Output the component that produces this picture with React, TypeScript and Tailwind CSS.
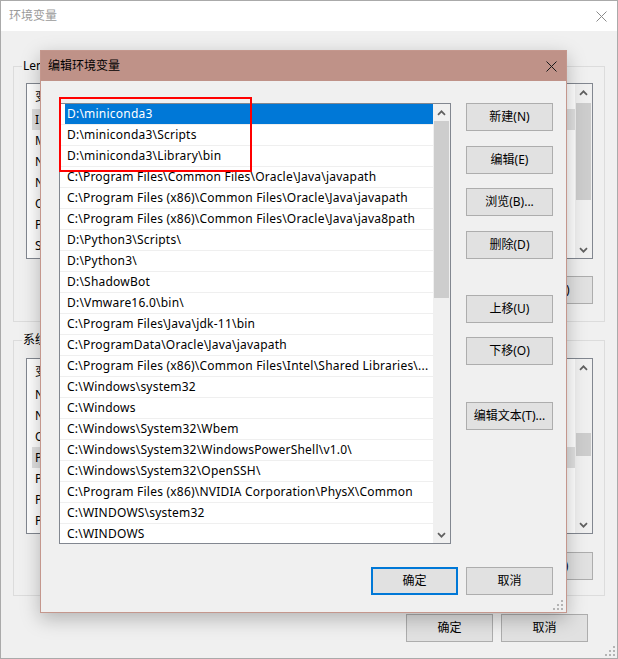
import React from "react";

const FONT = "font-['Noto_Sans','Noto_Sans_CJK_SC',sans-serif]";

function XIcon({ color }: { color: string }) {
  return (
    <svg width="11" height="11" viewBox="0 0 11 11">
      <path d="M0.5 0.5 L10.5 10.5 M10.5 0.5 L0.5 10.5" stroke={color} strokeWidth="1" fill="none" />
    </svg>
  );
}

function Chev({ down }: { down?: boolean }) {
  return (
    <svg width="9" height="6" viewBox="0 0 9 6">
      <path
        d={down ? "M1 1.2 L4.5 4.7 L8 1.2" : "M1 4.8 L4.5 1.3 L8 4.8"}
        stroke="#606060"
        strokeWidth="1.7"
        fill="none"
      />
    </svg>
  );
}

function Grip() {
  return (
    <svg width="10" height="10" viewBox="0 0 10 10">
      <g fill="#b4b4b4">
        <rect x="8" y="0" width="2" height="2" />
        <rect x="4" y="4" width="2" height="2" />
        <rect x="8" y="4" width="2" height="2" />
        <rect x="0" y="8" width="2" height="2" />
        <rect x="4" y="8" width="2" height="2" />
        <rect x="8" y="8" width="2" height="2" />
      </g>
    </svg>
  );
}

function Scrollbar({ thumb }: { thumb: string }) {
  return (
    <div className="w-[17px] shrink-0 flex flex-col bg-[#f0f0f0]">
      <div className="h-[17px] shrink-0 flex items-center justify-center">
        <Chev />
      </div>
      <div className={`mx-px shrink-0 bg-[#cdcdcd] ${thumb}`} />
      <div className="flex-1" />
      <div className="h-[17px] shrink-0 flex items-center justify-center">
        <Chev down />
      </div>
    </div>
  );
}

function Btn({ children, primary, className }: { children: React.ReactNode; primary?: boolean; className?: string }) {
  return (
    <div
      className={`flex items-center justify-center w-[87px] h-[28px] shrink-0 bg-[#e1e1e1] text-[12px] text-black ${
        primary ? "border-2 border-[#0078d7]" : "border border-[#adadad]"
      } ${className ?? ""}`}
    >
      {children}
    </div>
  );
}

function BgList({ rows, hi, thumb }: { rows: string[]; hi: number; thumb: string }) {
  return (
    <div className="flex h-[176px] border border-[#828790] bg-white">
      <div className="flex-1 flex flex-col overflow-hidden">
        <div className="h-[25px] shrink-0 flex items-center pl-[8px] whitespace-nowrap">变量</div>
        {rows.map((r, i) => (
          <div key={i} className="h-[21px] shrink-0 flex">
            <div
              className={`flex-1 ml-[5px] pl-[3px] flex items-center whitespace-nowrap overflow-hidden tracking-[0.2px] ${
                i === hi ? "bg-[#e0e0e0]" : ""
              }`}
            >
              {r}
            </div>
          </div>
        ))}
      </div>
      <Scrollbar thumb={thumb} />
    </div>
  );
}

const userRows = ["IntelliJ IDEA", "MOZ_PLUGIN_PATH", "NVM_HOME", "NVM_SYMLINK", "OneDrive", "Path", "SHADOWBOT_HOME"];

const sysRows = ["NUMBER_OF_PROCESSORS", "NVM_HOME", "OS", "Path", "PATHEXT", "PROCESSOR_ARCHITECTURE", "PROCESSOR_IDENTIFIER"];

const paths = [
  "D:\\miniconda3",
  "D:\\miniconda3\\Scripts",
  "D:\\miniconda3\\Library\\bin",
  "C:\\Program Files\\Common Files\\Oracle\\Java\\javapath",
  "C:\\Program Files (x86)\\Common Files\\Oracle\\Java\\javapath",
  "C:\\Program Files (x86)\\Common Files\\Oracle\\Java\\java8path",
  "D:\\Python3\\Scripts\\",
  "D:\\Python3\\",
  "D:\\ShadowBot",
  "D:\\Vmware16.0\\bin\\",
  "C:\\Program Files\\Java\\jdk-11\\bin",
  "C:\\ProgramData\\Oracle\\Java\\javapath",
  "C:\\Program Files (x86)\\Common Files\\Intel\\Shared Libraries\\...",
  "C:\\Windows\\system32",
  "C:\\Windows",
  "C:\\Windows\\System32\\Wbem",
  "C:\\Windows\\System32\\WindowsPowerShell\\v1.0\\",
  "C:\\Windows\\System32\\OpenSSH\\",
  "C:\\Program Files (x86)\\NVIDIA Corporation\\PhysX\\Common",
  "C:\\WINDOWS\\system32",
  "C:\\WINDOWS",
];

export default function App() {
  return (
    <div className={`relative w-[618px] h-[659px] overflow-hidden bg-[#f0f0f0] text-[12px] text-black ${FONT}`}>
      {/* Background window: 环境变量 */}
      <div className="relative flex flex-col w-[618px] h-[659px] border border-[#aaaaaa] bg-[#f0f0f0]">
        <div className="h-[30px] shrink-0 bg-white flex items-center justify-between pl-[8px] pr-[10px]">
          <span className="text-[12px] text-[#9a9a9a]">环境变量</span>
          <XIcon color="#8a8a8a" />
        </div>
        <div className="flex flex-col px-[12px]">
          <div className="relative mt-[35px] border border-[#dcdcdc] pt-[16px] pl-[12px] pr-[11px] pb-[17px]">
            <span className="absolute left-[8px] -top-[9px] bg-[#f0f0f0] px-px leading-[16px]">Len 的用户变量(U)</span>
            <BgList rows={userRows} hi={0} thumb="mt-[2px] h-[97px]" />
            <div className="mt-[17px] flex justify-end gap-[10px]">
              <Btn>新建(N)...</Btn>
              <Btn>编辑(E)...</Btn>
              <Btn>删除(D)</Btn>
            </div>
          </div>
          <div className="relative mt-[18px] border border-[#dcdcdc] pt-[17px] pl-[12px] pr-[11px] pb-[15px]">
            <span className="absolute left-[8px] -top-[9px] bg-[#f0f0f0] px-px leading-[16px]">系统变量(S)</span>
            <BgList rows={sysRows} hi={3} thumb="mt-[57px] h-[23px]" />
            <div className="mt-[18px] flex justify-end gap-[10px]">
              <Btn>新建(W)...</Btn>
              <Btn>编辑(I)...</Btn>
              <Btn>删除(L)</Btn>
            </div>
          </div>
          <div className="mt-[18px] flex justify-end gap-[8px] pr-[17px]">
            <Btn>确定</Btn>
            <Btn>取消</Btn>
          </div>
        </div>
        <div className="absolute right-[2px] bottom-[2px]">
          <Grip />
        </div>
      </div>

      {/* Dialog: 编辑环境变量 */}
      <div className="absolute left-[40px] top-[50px] w-[527px] h-[563px] flex flex-col bg-[#f0f0f0] border border-[#c4978d] shadow-[0_6px_18px_rgba(0,0,0,0.25)]">
        <div className="h-[30px] shrink-0 bg-[#bf9288] flex items-center justify-between pl-[7px] pr-[9px]">
          <span className="text-[12px] text-black">编辑环境变量</span>
          <XIcon color="#1a1a1a" />
        </div>
        <div className="flex pt-[22px] pl-[18px] pr-[13px]">
          <div className="flex w-[392px] h-[441px] shrink-0 border border-[#828790] bg-white">
            <div className="flex-1 flex flex-col overflow-hidden">
              {paths.map((p, i) => (
                <div key={i} className="h-[21px] shrink-0 border-b border-[#efefef]">
                  <div
                    className={`h-[20px] ml-[5px] pl-[2px] flex items-center whitespace-nowrap overflow-hidden tracking-[0.22px] ${
                      i === 0 ? "bg-[#0078d7] text-white" : "text-black"
                    }`}
                  >
                    {p}
                  </div>
                </div>
              ))}
            </div>
            <Scrollbar thumb="h-[177px]" />
          </div>
          <div className="ml-[15px] flex flex-col">
            <Btn>新建(N)</Btn>
            <Btn className="mt-[15px]">编辑(E)</Btn>
            <Btn className="mt-[14px]">浏览(B)...</Btn>
            <Btn className="mt-[15px]">删除(D)</Btn>
            <Btn className="mt-[36px]">上移(U)</Btn>
            <Btn className="mt-[14px]">下移(O)</Btn>
            <Btn className="mt-[37px]">编辑文本(T)...</Btn>
          </div>
        </div>
        <div className="mt-[23px] flex justify-end gap-[8px] pr-[13px]">
          <Btn primary>确定</Btn>
          <Btn>取消</Btn>
        </div>
        <div className="absolute right-[3px] bottom-[2px]">
          <Grip />
        </div>
      </div>

      {/* annotation rectangle */}
      <div className="absolute left-[59px] top-[97px] w-[193px] h-[75px] border-2 border-[#ff0000]" />
    </div>
  );
}
